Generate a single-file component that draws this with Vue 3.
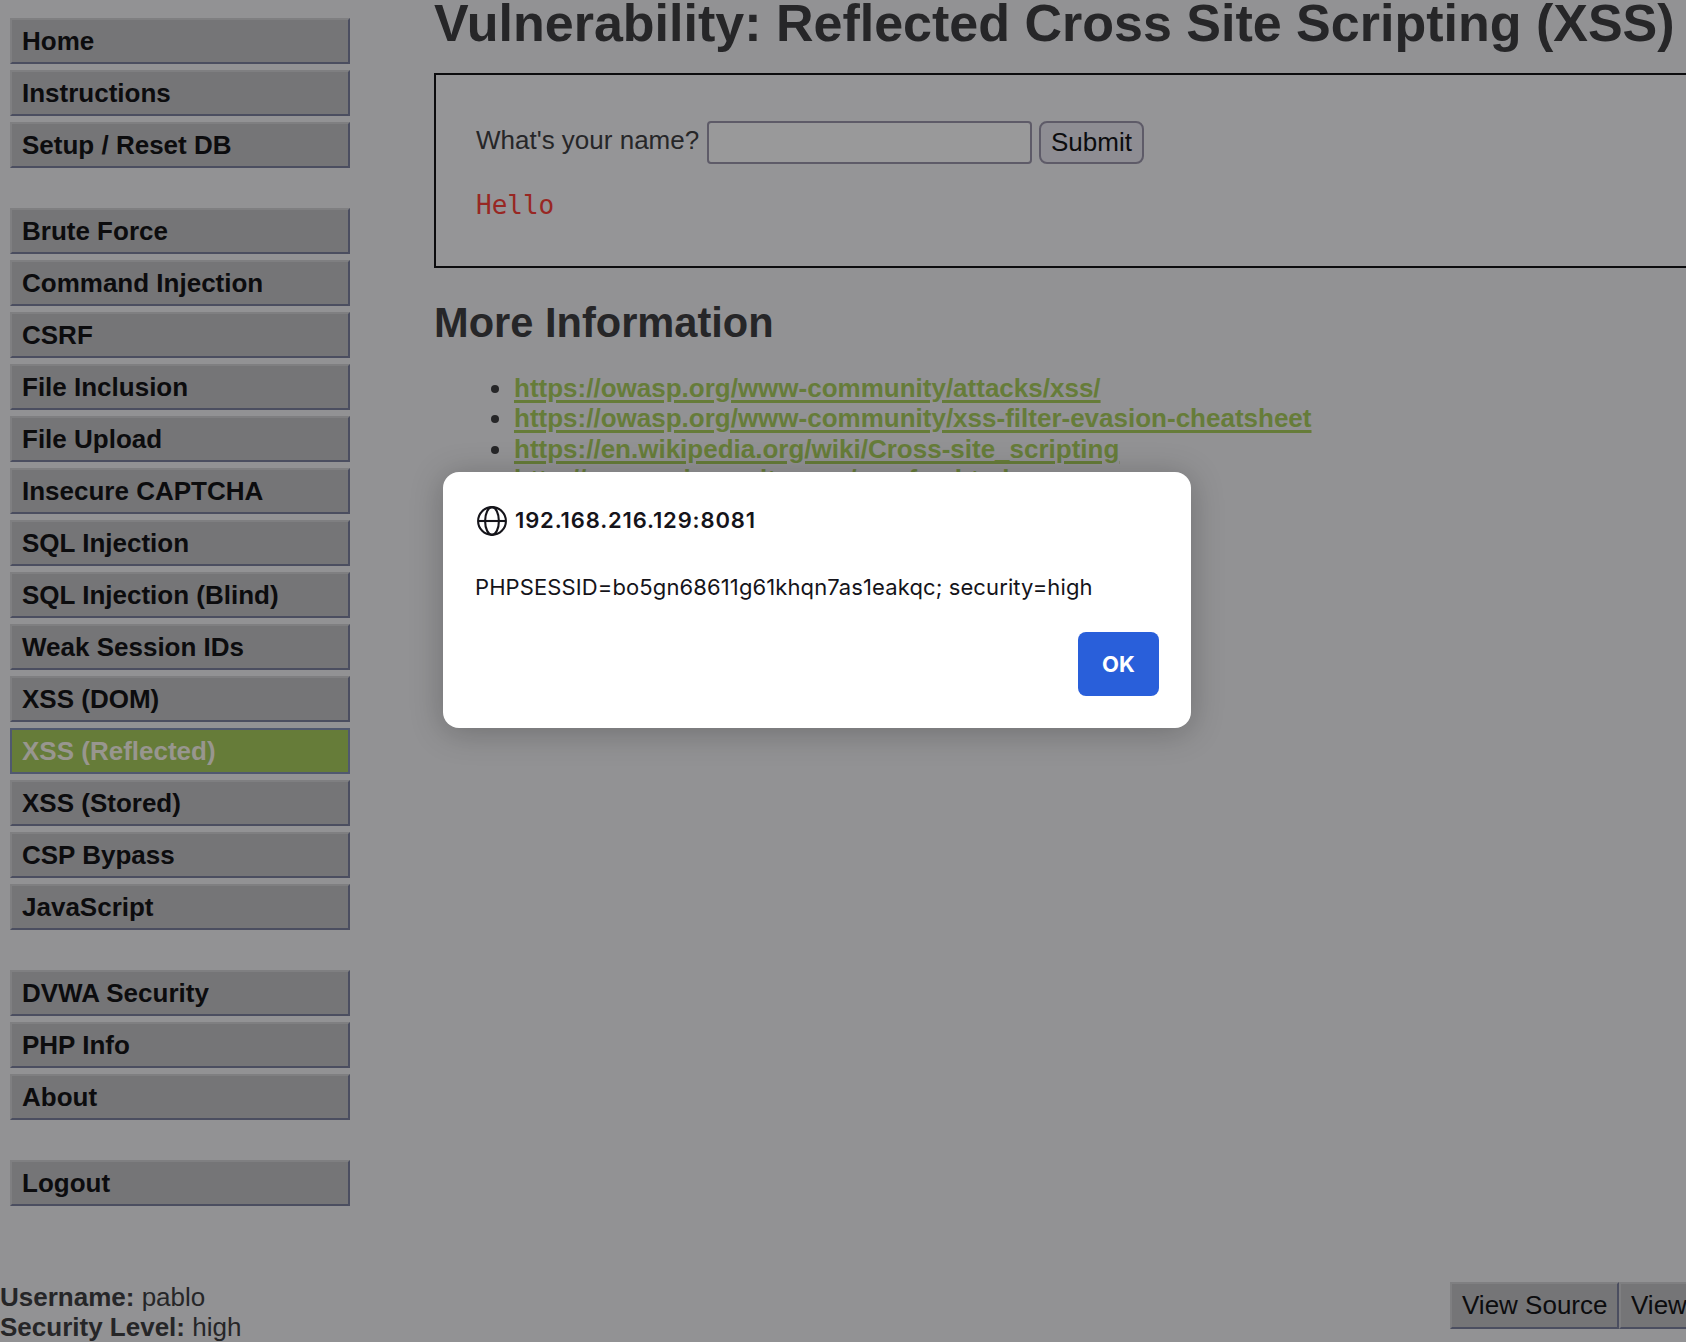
<script setup>
const menu = [
  ['Home', 'Instructions', 'Setup / Reset DB'],
  [
    'Brute Force', 'Command Injection', 'CSRF', 'File Inclusion', 'File Upload',
    'Insecure CAPTCHA', 'SQL Injection', 'SQL Injection (Blind)', 'Weak Session IDs',
    'XSS (DOM)', 'XSS (Reflected)', 'XSS (Stored)', 'CSP Bypass', 'JavaScript',
  ],
  ['DVWA Security', 'PHP Info', 'About'],
  ['Logout'],
]
const active = 'XSS (Reflected)'
const links = [
  'https://owasp.org/www-community/attacks/xss/',
  'https://owasp.org/www-community/xss-filter-evasion-cheatsheet',
  'https://en.wikipedia.org/wiki/Cross-site_scripting',
  'http://www.cgisecurity.com/xss-faq.html',
]
</script>

<template>
  <div class="page">
    <div class="columns">
      <nav class="menu">
        <ul v-for="(group, i) in menu" :key="i" class="group">
          <li v-for="item in group" :key="item" class="item" :class="{ selected: item === active }">{{ item }}</li>
        </ul>
      </nav>
      <main class="body">
        <h1>Vulnerability: Reflected Cross Site Scripting (XSS)</h1>
        <section class="panel">
          <form class="row" @submit.prevent>
            <label class="label" for="name">What's your name?</label>
            <input id="name" class="field" type="text" />
            <button class="submit" type="submit">Submit</button>
          </form>
          <pre class="hello">Hello</pre>
        </section>
        <h2>More Information</h2>
        <ul class="links">
          <li v-for="link in links" :key="link"><a href="#">{{ link }}</a></li>
        </ul>
      </main>
    </div>
    <footer class="system">
      <div class="info">
        <div><b>Username:</b> pablo</div>
        <div><b>Security Level:</b> high</div>
      </div>
      <div class="views">
        <button class="view">View Source</button>
        <button class="view">View</button>
      </div>
    </footer>

    <div class="dialog" role="alertdialog">
      <div class="origin">
        <svg class="globe" viewBox="0 0 30 30" fill="none" stroke="#15141a" stroke-width="2.1">
          <path d="M1 15h28" />
          <circle cx="15" cy="15" r="13.9" />
          <ellipse cx="15" cy="15" rx="6.9" ry="13.9" />
        </svg>
        <span class="host">192.168.216.129:8081</span>
      </div>
      <div class="message">PHPSESSID=bo5gn68611g61khqn7as1eakqc; security=high</div>
      <div class="actions"><button class="ok">OK</button></div>
    </div>
  </div>
</template>

<style>
html, body { margin: 0; overflow: hidden; background: #929294; }
</style>

<style scoped>
.page {
  position: relative;
  display: flex;
  flex-direction: column;
  width: 1686px;
  height: 1342px;
  overflow: hidden;
  background: #929294;
  color: #262628;
  font-family: "Liberation Sans", Arial, sans-serif;
  font-size: 26px;
  line-height: 30px;
}
ul { margin: 0; padding: 0; }
button { margin: 0; padding: 0; font: inherit; color: #0c0c0e; box-sizing: border-box; }
.columns { display: flex; height: 1282px; flex: none; }
.menu {
  display: flex;
  flex-direction: column;
  gap: 40px;
  box-sizing: border-box;
  width: 434px;
  flex: none;
  padding: 18px 84px 0 10px;
}
.group { display: flex; flex-direction: column; gap: 6px; list-style: none; }
.item {
  box-sizing: border-box;
  height: 46px;
  padding: 6px 10px;
  border: 2px solid;
  border-color: #7f7f81 #4b4e60 #4b4e60 #7f7f81;
  background: #757577;
  color: #0c0c0e;
  font-weight: bold;
}
.item.selected { background: #667c39; border-color: #50586f; color: #98968f; }
.body { flex: none; width: 1300px; }
h1, h2 { margin: 0; font-weight: bold; white-space: nowrap; }
h1 { font-size: 52px; line-height: 46px; height: 73px; }
.panel {
  box-sizing: border-box;
  height: 195px;
  padding: 46px 40px 0;
  border: 2px solid #0c0c0e;
  background: #959597;
}
.row { display: flex; height: 43px; }
.label { width: 231px; flex: none; line-height: 38px; white-space: nowrap; }
.field {
  box-sizing: border-box;
  width: 325px;
  height: 43px;
  border: 2px solid #5e5b68;
  border-radius: 4px;
  background: #99999a;
  outline: none;
}
.submit {
  width: 105px;
  height: 43px;
  margin-left: 7px;
  padding-bottom: 2px;
  border: 2px solid #5e5b68;
  border-radius: 8px;
  background: #8e8d93;
}
.hello {
  margin: 26px 0 0;
  color: #982723;
  font: 26px/30px "DejaVu Sans Mono", monospace;
}
h2 { margin-top: 32px; font-size: 41.6px; line-height: 46px; }
.links { margin-top: 27px; padding-left: 80px; line-height: 30.4px; }
.links a { color: #667c39; font-weight: bold; text-decoration: underline; text-decoration-thickness: 3px; text-underline-offset: 3px; }
.system { display: flex; justify-content: space-between; height: 60px; }
.info { white-space: nowrap; }
.views { display: flex; width: 236px; flex: none; }
.view {
  width: 169px;
  height: 47px;
  flex: none;
  padding: 0 0 2px 10px;
  border: 2px solid;
  border-color: #7f7f81 #4b4e60 #4b4e60 #7f7f81;
  background: #757577;
  text-align: left;
  white-space: nowrap;
}
.dialog {
  position: absolute;
  left: 443px;
  top: 472px;
  box-sizing: border-box;
  width: 748px;
  height: 256px;
  padding: 32px;
  border-radius: 16px;
  background: #fff;
  color: #15141a;
  font-family: Inter, sans-serif;
  font-size: 22px;
  box-shadow: 0 4px 32px rgba(12, 12, 13, 0.26);
}
.origin { display: flex; align-items: center; height: 34px; padding-left: 2px; }
.globe { width: 30px; height: 30px; }
.host { margin-left: 8px; padding-bottom: 2px; font-weight: 600; line-height: 30px; letter-spacing: 0.86px; }
.message { margin-top: 34px; line-height: 30px; white-space: nowrap; letter-spacing: 0.11px; }
.actions { display: flex; justify-content: flex-end; margin-top: 30px; }
.ok {
  width: 81px;
  height: 64px;
  border: 0;
  border-radius: 8px;
  background: #295fda;
  color: #fff;
  font-weight: 700;
}
</style>
